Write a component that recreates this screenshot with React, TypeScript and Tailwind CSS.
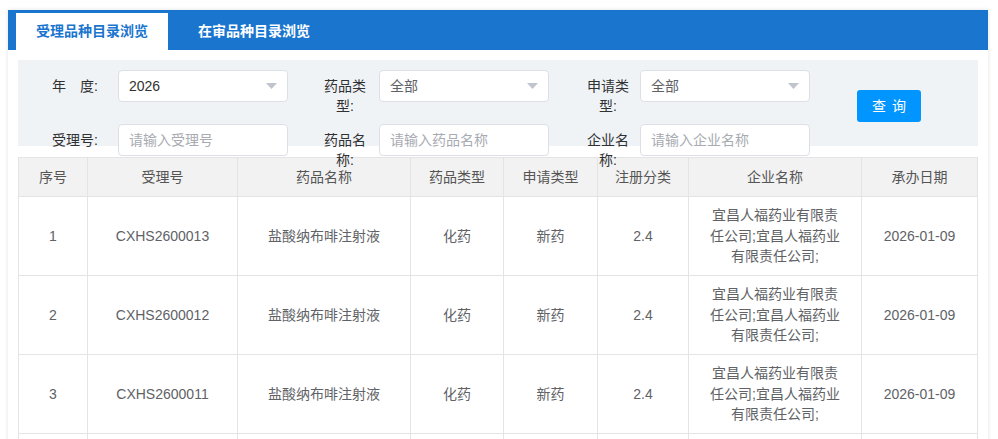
import React from 'react';

interface Row {
    no: number;
    acceptNo: string;
    drugName: string;
    drugType: string;
    applyType: string;
    regClass: string;
    company: string;
    date: string;
}

const rows: Row[] = [
    { no: 1, acceptNo: 'CXHS2600013', drugName: '盐酸纳布啡注射液', drugType: '化药', applyType: '新药', regClass: '2.4', company: '宜昌人福药业有限责任公司;宜昌人福药业有限责任公司;', date: '2026-01-09' },
    { no: 2, acceptNo: 'CXHS2600012', drugName: '盐酸纳布啡注射液', drugType: '化药', applyType: '新药', regClass: '2.4', company: '宜昌人福药业有限责任公司;宜昌人福药业有限责任公司;', date: '2026-01-09' },
    { no: 3, acceptNo: 'CXHS2600011', drugName: '盐酸纳布啡注射液', drugType: '化药', applyType: '新药', regClass: '2.4', company: '宜昌人福药业有限责任公司;宜昌人福药业有限责任公司;', date: '2026-01-09' },
    { no: 4, acceptNo: 'CXHS2600010', drugName: '盐酸纳布啡注射液', drugType: '化药', applyType: '新药', regClass: '2.4', company: '宜昌人福药业有限责任公司;宜昌人福药业有限责任公司;', date: '2026-01-09' },
];

const columns = [
    { title: '序号', width: 69 },
    { title: '受理号', width: 150 },
    { title: '药品名称', width: 173 },
    { title: '药品类型', width: 93 },
    { title: '申请类型', width: 94 },
    { title: '注册分类', width: 91 },
    { title: '企业名称', width: 173 },
    { title: '承办日期', width: 116 },
];

const Caret = () => (
    <svg width="11" height="6" viewBox="0 0 11 6" className="shrink-0">
        <path d="M0 0 L11 0 L5.5 6 Z" fill="#c0c4cc" />
    </svg>
);

// labels are 50px boxes with centred text, so the longer ones wrap onto a second line
const Label = ({ text, gap }: { text: string; gap: string }) => (
    <div className={`w-[50px] pt-[6px] text-center text-[14px] leading-[20px] text-[#303133] shrink-0 ${gap}`}>
        {text}
    </div>
);

const SelectBox = ({ value, muted }: { value: string; muted?: boolean }) => (
    <div className="w-[170px] h-[32px] bg-white border border-[#dcdfe6] rounded-[4px] flex items-center justify-between pl-[10px] pr-[10px] shrink-0">
        <span className={`text-[14px] ${muted ? 'text-[#606266]' : 'text-[#303133]'}`}>{value}</span>
        <Caret />
    </div>
);

const TextBox = ({ placeholder }: { placeholder: string }) => (
    <input
        type="text"
        placeholder={placeholder}
        className="w-[170px] h-[32px] bg-white border border-[#dcdfe6] rounded-[4px] px-[10px] text-[14px] text-[#303133] placeholder:text-[#a8abb2] outline-none shrink-0"
    />
);

const App: React.FC = () => {
    return (
        <div className="min-h-screen bg-white pt-[10px] pl-[8px] font-['Liberation_Sans','Noto_Sans_CJK_SC',sans-serif]">
            <div className="w-[980px] bg-white shadow-[0_0_4px_rgba(0,0,0,0.12)] min-h-[429px]">
                {/* Tabs */}
                <div className="h-[40px] bg-[#1a75cf] flex items-end pl-[8px]">
                    <div className="h-[37px] bg-white px-[20px] flex items-center text-[14px] font-bold text-[#1a75cf]">
                        受理品种目录浏览
                    </div>
                    <div className="h-[37px] px-[30px] flex items-center text-[14px] font-bold text-white">
                        在审品种目录浏览
                    </div>
                </div>

                <div className="px-[10px] pt-[10px]">
                    {/* Filters */}
                    <div className="relative z-10 h-[86px] bg-[#f0f3f6] pl-[32px] pt-[10px] flex">
                        <div>
                            <div className="flex h-[54px]">
                                <div className="flex items-start">
                                    <Label text="年　度:" gap="mr-[18px]" />
                                    <SelectBox value="2026" />
                                </div>
                                <div className="flex items-start ml-[32px]">
                                    <Label text="药品类型:" gap="mr-[9px]" />
                                    <SelectBox value="全部" muted />
                                </div>
                                <div className="flex items-start ml-[34px]">
                                    <Label text="申请类型:" gap="mr-[7px]" />
                                    <SelectBox value="全部" muted />
                                </div>
                            </div>
                            <div className="flex h-[54px]">
                                <div className="flex items-start">
                                    <Label text="受理号:" gap="mr-[18px]" />
                                    <TextBox placeholder="请输入受理号" />
                                </div>
                                <div className="flex items-start ml-[32px]">
                                    <Label text="药品名称:" gap="mr-[9px]" />
                                    <TextBox placeholder="请输入药品名称" />
                                </div>
                                <div className="flex items-start ml-[34px]">
                                    <Label text="企业名称:" gap="mr-[7px]" />
                                    <TextBox placeholder="请输入企业名称" />
                                </div>
                            </div>
                        </div>
                        <div className="pt-[20px] ml-[47px]">
                            <button className="w-[64px] h-[32px] bg-[#0095ff] rounded-[3px] text-white text-[14px] tracking-[6px] pl-[6px]">
                                查询
                            </button>
                        </div>
                    </div>

                    {/* Table */}
                    <table className="mt-[11px] w-[959px] table-fixed border-collapse text-[14px]">
                        <colgroup>
                            {columns.map((c) => (
                                <col key={c.title} style={{ width: c.width }} />
                            ))}
                        </colgroup>
                        <thead>
                            <tr className="bg-[#f2f2f2]">
                                {columns.map((c) => (
                                    <th key={c.title} className="h-[39px] border border-[#e4e4e4] font-normal text-[#555] text-center p-0">
                                        {c.title}
                                    </th>
                                ))}
                            </tr>
                        </thead>
                        <tbody className="text-[#606266]">
                            {rows.map((r) => (
                                <tr key={r.no}>
                                    <td className="h-[79px] border border-[#e4e4e4] text-center p-0">{r.no}</td>
                                    <td className="border border-[#e4e4e4] text-center p-0">{r.acceptNo}</td>
                                    <td className="border border-[#e4e4e4] text-center p-0">{r.drugName}</td>
                                    <td className="border border-[#e4e4e4] text-center p-0">{r.drugType}</td>
                                    <td className="border border-[#e4e4e4] text-center p-0">{r.applyType}</td>
                                    <td className="border border-[#e4e4e4] text-center p-0">{r.regClass}</td>
                                    <td className="border border-[#e4e4e4] text-center px-[20px] py-0 leading-[20.5px]">{r.company}</td>
                                    <td className="border border-[#e4e4e4] text-center p-0">{r.date}</td>
                                </tr>
                            ))}
                        </tbody>
                    </table>
                </div>
            </div>
        </div>
    );
};

export default App;
